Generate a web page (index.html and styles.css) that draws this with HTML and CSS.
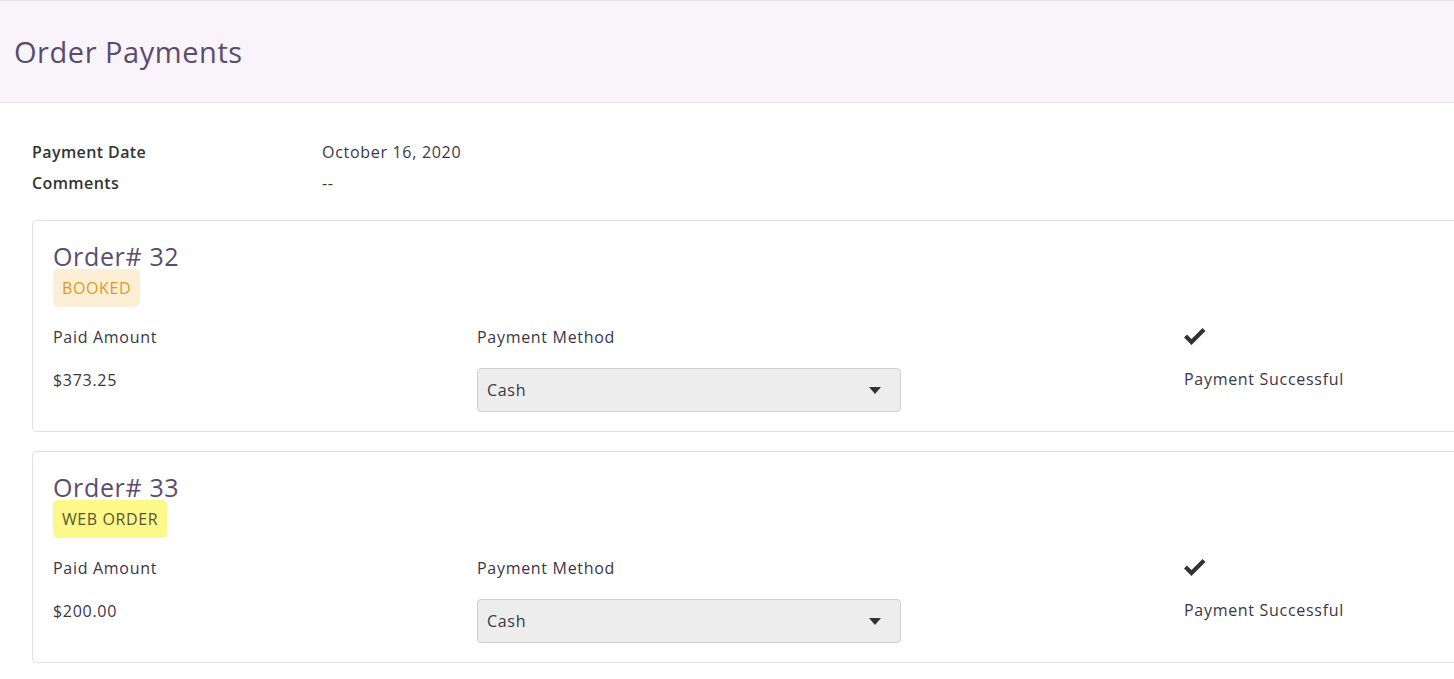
FILE: index.html
```html
<!DOCTYPE html>
<html>
<head>
<meta charset="utf-8">
<link rel="stylesheet" href="styles.css">
</head>
<body>
<header class="page-header">
  <h1 class="page-title">Order Payments</h1>
</header>
<main class="content">
  <dl class="info">
    <dt>Payment Date</dt><dd>October 16, 2020</dd>
    <dt>Comments</dt><dd>--</dd>
  </dl>

  <section class="card">
    <h2 class="order-title">Order# 32</h2>
    <span class="badge badge-booked">BOOKED</span>
    <div class="row">
      <div class="col">
        <div class="label">Paid Amount</div>
        <div class="value">$373.25</div>
      </div>
      <div class="col">
        <div class="label">Payment Method</div>
        <div class="select"><span>Cash</span><span class="caret"></span></div>
      </div>
      <div class="col">
        <svg class="check" width="24" height="20" viewBox="0 0 24 20"><polyline points="2.5,10 8.5,16 21,3.5" fill="none" stroke="#333" stroke-width="4.2" stroke-linecap="butt" stroke-linejoin="miter"/></svg>
        <div class="value status">Payment Successful</div>
      </div>
    </div>
  </section>

  <section class="card">
    <h2 class="order-title">Order# 33</h2>
    <span class="badge badge-web">WEB ORDER</span>
    <div class="row">
      <div class="col">
        <div class="label">Paid Amount</div>
        <div class="value">$200.00</div>
      </div>
      <div class="col">
        <div class="label">Payment Method</div>
        <div class="select"><span>Cash</span><span class="caret"></span></div>
      </div>
      <div class="col">
        <svg class="check" width="24" height="20" viewBox="0 0 24 20"><polyline points="2.5,10 8.5,16 21,3.5" fill="none" stroke="#333" stroke-width="4.2" stroke-linecap="butt" stroke-linejoin="miter"/></svg>
        <div class="value status">Payment Successful</div>
      </div>
    </div>
  </section>
</main>
</body>
</html>
```
FILE: styles.css
```css
html, body {
  margin: 0;
  padding: 0;
  overflow: hidden;
}
body {
  font-family: "Open Sans", "Noto Sans", sans-serif;
  color: #3b3646;
  background: #fff;
  font-size: 16px;
  letter-spacing: 0.7px;
}
.page-header {
  background: #f9f4fa;
  border-top: 1px solid #e6e0ef;
  border-bottom: 1px solid #e6e0ef;
  height: 101px;
  display: flex;
  align-items: center;
  padding-left: 14px;
}
.page-title {
  margin: 0;
  font-weight: 400;
  font-size: 29px;
  color: #5a4c6e;
  letter-spacing: 0.55px;
}
.content {
  padding: 38px 0 0 32px;
  width: 1800px;
}
.info {
  display: grid;
  grid-template-columns: 290px 1fr;
  row-gap: 9px;
  margin: 0 0 26px 0;
  line-height: 22px;
}
.info dt {
  font-weight: 600;
  color: #333;
  letter-spacing: 0.4px;
}
.info dd {
  margin: 0;
  color: #3b3646;
}
.card {
  border: 1px solid #e4dfee;
  border-radius: 4px;
  padding: 20px 20px 19px 20px;
  margin-bottom: 19px;
}
.order-title {
  margin: 0;
  font-weight: 400;
  font-size: 25px;
  line-height: 30px;
  color: #5a4c6e;
  letter-spacing: 0.65px;
}
.badge {
  display: inline-block;
  margin-top: -2px;
  padding: 0 9px;
  height: 38px;
  line-height: 38px;
  border-radius: 5px;
  font-size: 16px;
  letter-spacing: 0.6px;
}
.badge-booked {
  background: #fdefd6;
  color: #d99b2b;
}
.badge-web {
  background: #fcf98a;
  color: #5a5530;
}
.row {
  display: grid;
  grid-template-columns: 424px 707px 1fr;
  margin-top: 18px;
}
.label {
  line-height: 24px;
  margin-bottom: 19px;
}
.value {
  line-height: 24px;
}
.select {
  height: 42px;
  background: #ededed;
  border: 1px solid #cfcfcf;
  border-radius: 4px;
  display: flex;
  align-items: center;
  justify-content: space-between;
  padding: 0 19px 0 9px;
  box-sizing: content-box;
  width: 394px;
  margin-top: 1px;
}
.caret {
  width: 0;
  height: 0;
  border-left: 6px solid transparent;
  border-right: 6px solid transparent;
  border-top: 7px solid #333;
}
.check {
  display: block;
  margin: 1px 0 21px -1px;
}
```
